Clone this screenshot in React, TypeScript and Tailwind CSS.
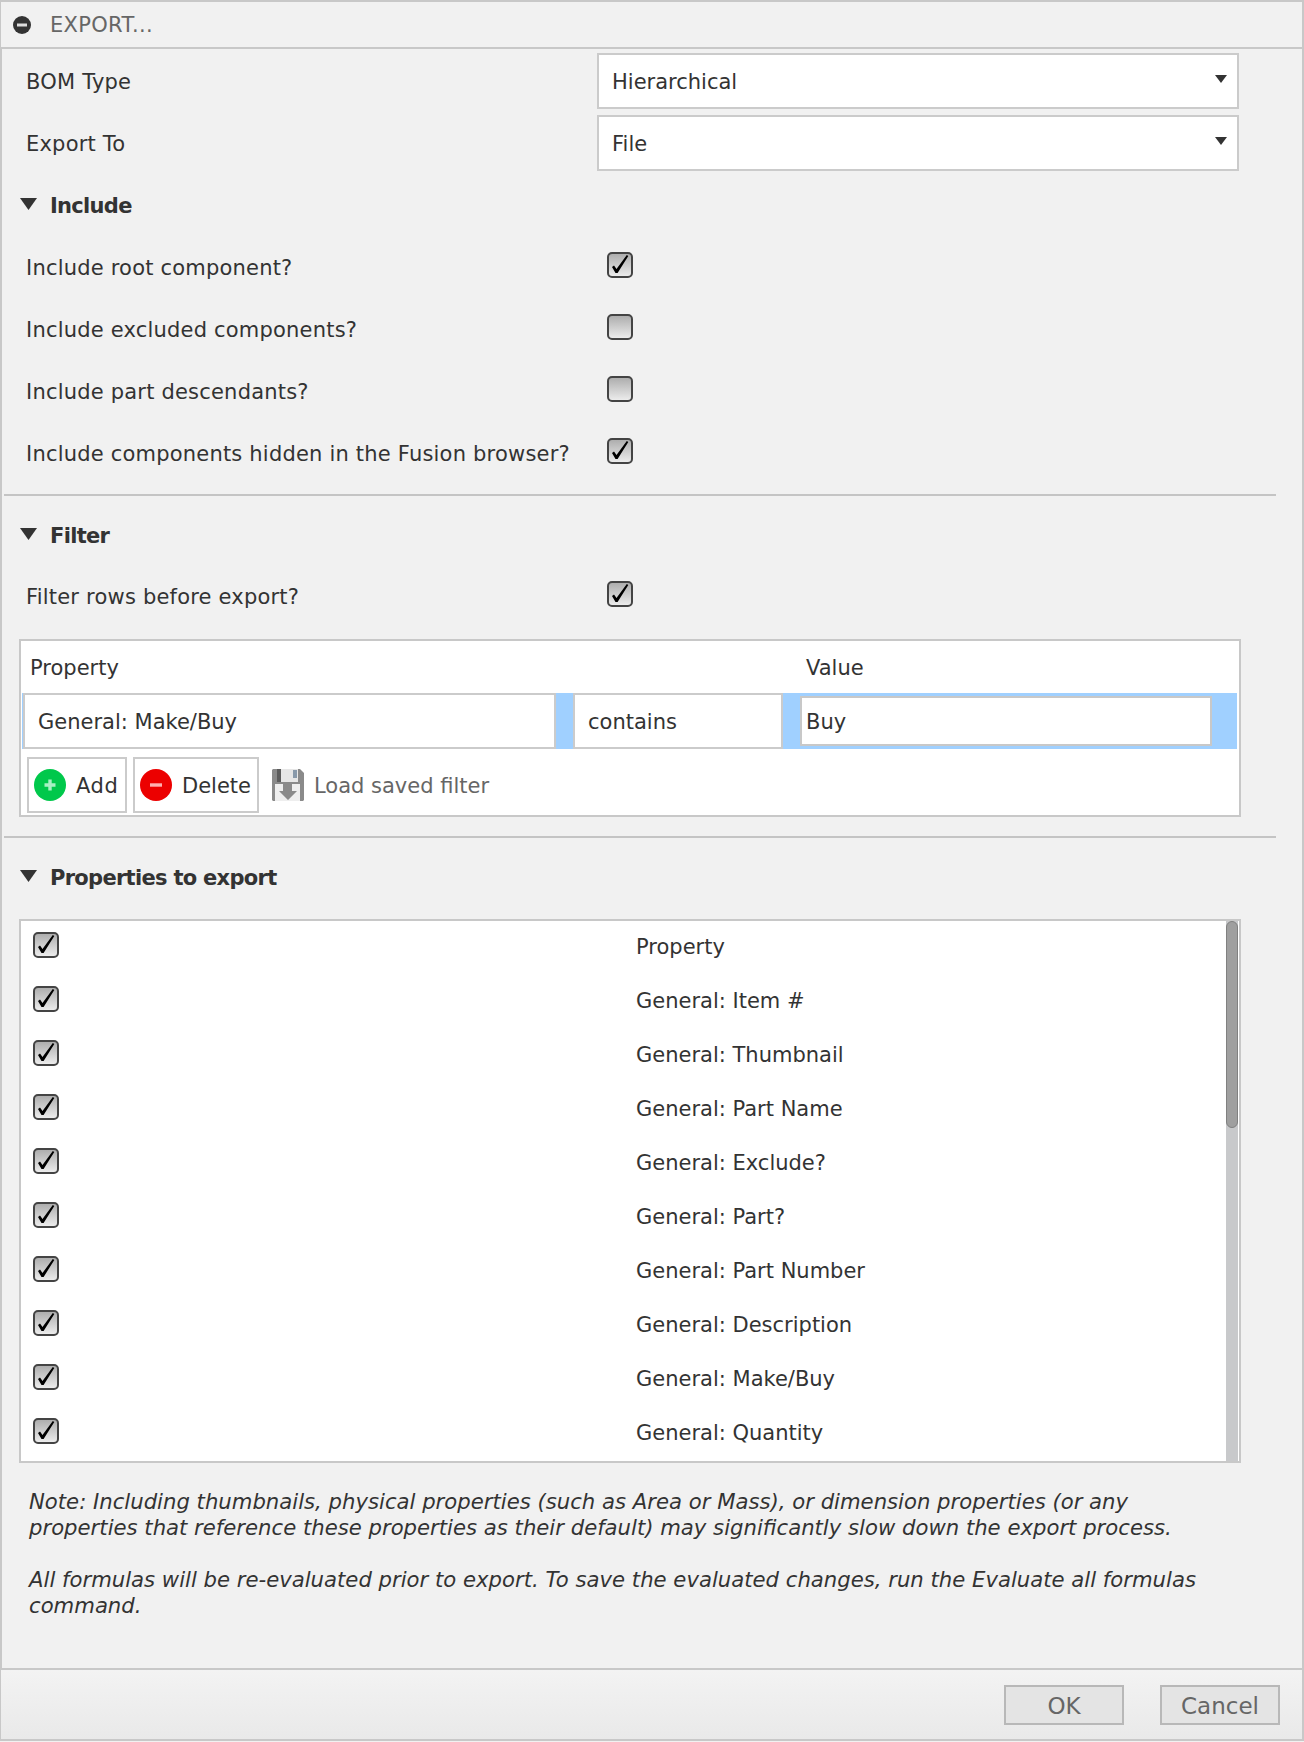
const fieldClass = "bg-white border-2 border-[#cbcbcb] flex items-center";
// DejaVu sits a little high compared to the reference font
const textClass = "pt-[4px]";

function Arrow({ className }: { className: string }) {
  return (
    <svg viewBox="0 0 12 8" preserveAspectRatio="none" className={className}>
      <polygon points="0,0 12,0 6,8" fill="#333" />
    </svg>
  );
}

function Checkbox({ checked = false }: { checked?: boolean }) {
  return (
    <div className="w-[26px] h-[26px] rounded-[5px] border-[2px] border-[#444] bg-gradient-to-b from-[#aeaeae] to-[#ececec] flex items-center justify-center">
      {checked && (
        <svg viewBox="0 0 22 22" className="w-[22px] h-[22px]">
          <polygon points="3,13 5,11.500 7.500,15 17.800,1 19.300,2 8.600,19 6.500,19" fill="#000" />
        </svg>
      )}
    </div>
  );
}

function Row({ label, children }: { label: string; children: React.ReactNode }) {
  return (
    <div className="h-[62px] grid grid-cols-[571px_1fr] items-center pl-[24px]">
      <span className={`${textClass} tracking-[0.2px]`}>{label}</span>
      {children}
    </div>
  );
}

function SelectRow({ label, value }: { label: string; value: string }) {
  return (
    <Row label={label}>
      <div className={`${fieldClass} h-[56px] w-[642px] pl-[13px] pr-[10px] justify-between`}>
        <span className={textClass}>{value}</span>
        <Arrow className="w-[12px] h-[8px] mb-[5px]" />
      </div>
    </Row>
  );
}

function CheckRow({ label, checked }: { label: string; checked?: boolean }) {
  return (
    <Row label={label}>
      <div className="ml-[10px] mb-[4px]">
        <Checkbox checked={checked} />
      </div>
    </Row>
  );
}

function Section({ title }: { title: string }) {
  return (
    <div className="h-[62px] flex items-center pl-[18px] font-bold tracking-[-0.7px]">
      <Arrow className="w-[17px] h-[12px] mb-[2px] mr-[13px]" />
      <span className={textClass}>{title}</span>
    </div>
  );
}

function RoundIcon({ color, sign }: { color: string; sign: "plus" | "minus" }) {
  return (
    <svg viewBox="0 0 32 32" className="w-[32px] h-[32px] shrink-0">
      <circle cx="16" cy="16" r="16" fill={color} />
      {sign === "plus" ? (
        <path d="M16 10.500v11M10.500 16h11" stroke="#a8f0c4" strokeWidth="3.400" />
      ) : (
        <path d="M10 16h12" stroke="#ffb0b0" strokeWidth="3.400" />
      )}
    </svg>
  );
}

function Floppy() {
  return (
    <svg viewBox="0 0 32 32" className="w-[32px] h-[32px] shrink-0">
      <path d="M1 0h27l4 4v27l-1 1H1l-1-1V1z" fill="#8a8a8a" />
      <rect x="5" y="0" width="4" height="13" fill="#5c5c5c" />
      <rect x="9" y="0" width="17" height="13" fill="#e6e6e6" />
      <rect x="21" y="1" width="4" height="8" fill="#8899aa" />
      <rect x="3" y="15" width="25" height="17" fill="#eeeeee" />
      <path d="M11 15h9v7h5l-9 9-9-9h4z" fill="#8a8a8a" />
    </svg>
  );
}

const properties = [
  "Property",
  "General: Item #",
  "General: Thumbnail",
  "General: Part Name",
  "General: Exclude?",
  "General: Part?",
  "General: Part Number",
  "General: Description",
  "General: Make/Buy",
  "General: Quantity",
];

export default function App() {
  return (
    <div className="w-[1304px] h-[1742px] bg-[#f1f1f1] flex flex-col overflow-hidden font-['DejaVu_Sans',sans-serif] text-[21px] text-[#333]">
      <header className="h-[49px] shrink-0 border-t-2 border-b-2 border-l border-r-2 border-[#c8c8c8] flex items-center pl-[12px] text-[#666]">
        <svg viewBox="0 0 18 18" className="w-[18px] h-[18px] mr-[19px]">
          <circle cx="9" cy="9" r="9" fill="#333" />
          <rect x="4" y="7.500" width="10" height="3" fill="#ddd" />
        </svg>
        <span className="pt-[2px] tracking-[0.3px]">EXPORT...</span>
      </header>

      <main className="flex-1 border-l-2 border-r-2 border-[#c8c8c8] pt-px">
        <SelectRow label="BOM Type" value="Hierarchical" />
        <SelectRow label="Export To" value="File" />
        <Section title="Include" />
        <CheckRow label="Include root component?" checked />
        <CheckRow label="Include excluded components?" />
        <CheckRow label="Include part descendants?" />
        <CheckRow label="Include components hidden in the Fusion browser?" checked />

        <div className="mt-[10px] ml-[2px] w-[1272px] h-[2px] bg-[#c4c4c4]" />

        <div className="mt-[8px] mb-[-1px]">
          <Section title="Filter" />
        </div>
        <CheckRow label="Filter rows before export?" checked />

        <div className="mt-[12px] ml-[17px] w-[1222px] h-[178px] bg-white border-2 border-[#c8c8c8] flex flex-col">
          <div className="h-[52px] shrink-0 grid grid-cols-[776px_1fr] items-center pl-[9px]">
            <span className={textClass}>Property</span>
            <span className={textClass}>Value</span>
          </div>
          <div className="h-[56px] shrink-0 ml-px mr-[2px] pl-px bg-[#a0d0ff] flex">
            <div className={`${fieldClass} w-[533px] pl-[13px]`}>
              <span className={textClass}>General: Make/Buy</span>
            </div>
            <div className={`${fieldClass} ml-[17px] w-[210px] pl-[13px]`}>
              <span className={textClass}>contains</span>
            </div>
            <div className="ml-[17px] my-[3px] w-[412px] bg-white border-2 border-[#c8c8c8] flex items-center pl-[4px]">
              <span className={textClass}>Buy</span>
            </div>
          </div>
          <div className="flex items-center gap-[6px] pl-[6px] mt-[8px]">
            <div className={`${fieldClass} w-[100px] h-[56px] pl-[5px] gap-[10px]`}>
              <RoundIcon color="#00c84b" sign="plus" />
              <span className={`${textClass} tracking-[0.6px]`}>Add</span>
            </div>
            <div className={`${fieldClass} w-[126px] h-[56px] pl-[5px] gap-[10px]`}>
              <RoundIcon color="#ec0000" sign="minus" />
              <span className={textClass}>Delete</span>
            </div>
            <div className="flex items-center gap-[10px] ml-[7px] text-[#666]">
              <Floppy />
              <span className={textClass}>Load saved filter</span>
            </div>
          </div>
        </div>

        <div className="mt-[19px] ml-[2px] w-[1272px] h-[2px] bg-[#c4c4c4]" />

        <div className="mt-[8px]">
          <Section title="Properties to export" />
        </div>

        <div className="mt-[11px] ml-[17px] w-[1222px] h-[544px] bg-white border-2 border-[#c8c8c8] flex">
          <div className="flex-1 overflow-hidden">
            {properties.map((name) => (
              <div key={name} className="h-[54px] grid grid-cols-[615px_1fr] items-center pb-[4px]">
                <div className="ml-[12px] mb-[2px]">
                  <Checkbox checked />
                </div>
                <span className={textClass}>{name}</span>
              </div>
            ))}
          </div>
          <div className="w-[12px] mr-[1px] bg-[#c8c9cb]">
            <div className="h-[207px] rounded-[6px] bg-[#9f9f9f] border border-[#808080]" />
          </div>
        </div>

        <p className="mt-[26px] ml-[27px] text-[21.2px] leading-[26px] italic whitespace-nowrap">
          Note: Including thumbnails, physical properties (such as Area or Mass), or dimension properties (or any
          <br />
          properties that reference these properties as their default) may significantly slow down the export process.
          <br />
          <br />
          All formulas will be re-evaluated prior to export. To save the evaluated changes, run the Evaluate all formulas
          <br />
          command.
        </p>
      </main>

      <footer className="h-[73px] shrink-0 mb-px border-t-2 border-b-2 border-l border-r-2 border-[#c8c8c8] bg-gradient-to-b from-[#f3f3f3] to-[#e9e9e9] flex items-center justify-end gap-[36px] pr-[22px] text-[23px] text-[#666]">
        <div className="w-[120px] h-[40px] bg-[#e4e4e4] border-2 border-[#b8b8b8] flex items-center justify-center">
          <span className={textClass}>OK</span>
        </div>
        <div className="w-[120px] h-[40px] bg-[#e4e4e4] border-2 border-[#b8b8b8] flex items-center justify-center">
          <span className={textClass}>Cancel</span>
        </div>
      </footer>
    </div>
  );
}
